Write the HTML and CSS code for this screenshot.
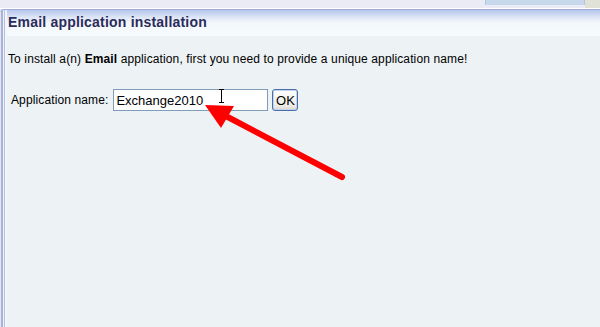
FILE: index.html
```html
<!DOCTYPE html>
<html>
<head>
    <title>Email application installation</title>
    <link rel="stylesheet" href="styles.css">
</head>
<body>
    <div class="topbar">
        <div class="topbar-fill"></div>
        <div class="topbar-tab"></div>
        <div class="topbar-end"></div>
    </div>
    <div class="panel">
        <div class="edge"></div>
        <div class="main">
            <div class="panel-head">
                <h1 class="title">Email application installation</h1>
            </div>
            <div class="panel-body">
                <p class="intro">To install a(n) <b>Email</b> application, first you need to provide a unique application name!</p>
                <form class="name-form" onsubmit="return false;">
                    <label class="name-label" for="appname">Application name:</label>
                    <div class="field-wrap">
                        <input class="name-input" id="appname" type="text" value="Exchange2010">
                        <span class="ibeam"></span>
                    </div>
                    <button class="ok-button">OK</button>
                </form>
            </div>
        </div>
    </div>

    <!-- annotation arrow drawn over the form -->
    <svg class="arrow" width="600" height="327" viewBox="0 0 600 327">
        <line x1="342" y1="177" x2="222" y2="114" stroke="#ff0000" stroke-width="6" stroke-linecap="round"/>
        <polygon points="205,105 234,106 221,128" fill="#ff0000"/>
    </svg>
</body>
</html>
```

FILE: styles.css
```css
body {
    margin: 0;
    padding: 0;
    background-color: #ebebf5;
    font-family: 'Liberation Sans', Arial, sans-serif;
    width: 600px;
    height: 327px;
    overflow: hidden;
    position: relative;
}

.topbar {
    display: flex;
    height: 8px;
    border-bottom: 1px solid #ffffff;
}

.topbar-fill {
    flex: 1;
}

.topbar-tab {
    width: 98px;
    height: 5px;
    background-color: #c8d8ec;
    border-left: 1px solid #b8c4dc;
    border-right: 1px solid #b8c4dc;
}

.topbar-end {
    width: 15px;
    background-color: #e0e2d8;
}

.panel {
    display: flex;
    height: 318px;
}

.edge {
    width: 7px;
    background: linear-gradient(to right,
        #e4e6f2 0, #e4e6f2 1px,
        #a8b2da 1px, #a8b2da 3px,
        #eef2f8 3px, #eef2f8 4px,
        #b8c2e4 4px, #b8c2e4 5px,
        #f2f6f8 5px, #f2f6f8 7px);
    border-top: 1px solid #a0acd8;
    border-top-left-radius: 4px;
}

.main {
    flex: 1;
    display: flex;
    flex-direction: column;
}

.panel-head {
    height: 26px;
    border-top: 1px solid #a0acd8;
    background: linear-gradient(to bottom, #b4c4ec 0, #dce4f6 7px, #f4f8fb 13px, #f5fafc 100%);
}

.title {
    margin: 0;
    padding: 4px 0 0 1px;
    font-size: 14px;
    font-weight: bold;
    letter-spacing: 0.2px;
    color: #2b2b5c;
}

.panel-body {
    flex: 1;
    background-color: #edf2f5;
}

.intro {
    margin: 16px 0 0 1px;
    font-size: 12px;
    letter-spacing: 0.12px;
    color: #000;
}

.name-form {
    display: flex;
    align-items: flex-start;
    margin-top: 23px;
    padding-left: 4px;
}

.name-label {
    font-size: 12px;
    letter-spacing: 0.12px;
    margin-top: 4px;
    margin-right: 5px;
}

.field-wrap {
    position: relative;
}

.name-input {
    box-sizing: border-box;
    width: 155px;
    height: 22px;
    margin: 0;
    padding: 1px 2px 0;
    border: 1px solid #7f9db9;
    background-color: #fff;
    font-family: 'Liberation Sans', Arial, sans-serif;
    font-size: 13px;
    color: #000;
    outline: none;
}

.ibeam {
    position: absolute;
    left: 108px;
    top: 0;
    width: 1px;
    height: 14px;
    background-color: #000;
}

.ibeam::before,
.ibeam::after {
    content: "";
    position: absolute;
    left: -2px;
    width: 5px;
    height: 1px;
    background-color: #000;
}

.ibeam::before {
    top: 0;
}

.ibeam::after {
    bottom: 0;
}

.ok-button {
    box-sizing: border-box;
    width: 26px;
    height: 22px;
    margin-left: 4px;
    padding: 0;
    border: 1px solid #4a6ea8;
    border-radius: 3px;
    background: linear-gradient(to bottom, #ffffff, #ecebe6 80%, #d8d6cc);
    box-shadow: inset 0 0 0 1px #c4d4f0;
    font-family: 'Liberation Sans', Arial, sans-serif;
    font-size: 13px;
    color: #000;
    cursor: pointer;
}

.arrow {
    position: absolute;
    left: 0;
    top: 0;
    pointer-events: none;
}
```
